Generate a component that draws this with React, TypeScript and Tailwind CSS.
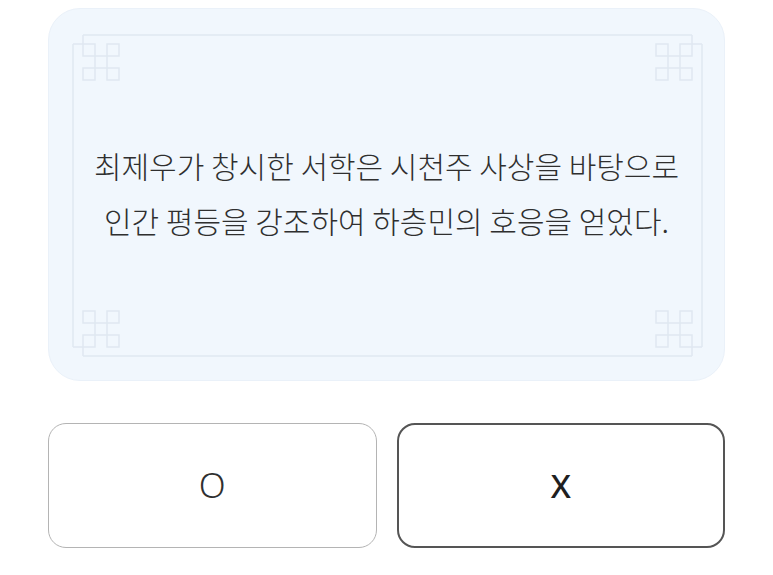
import React from "react";

function Knot({ x, y }: { x: number; y: number }) {
  const s = 12;
  const a = x, b = x + s, c = x + 2 * s, d = x + 3 * s;
  const e = y, f = y + s, g = y + 2 * s, h = y + 3 * s;
  return (
    <path
      d={`M${a} ${e}H${b}V${h}H${a}V${g}H${d}V${h}H${c}V${e}H${d}V${f}H${a}Z`}
      fill="none"
    />
  );
}

function Frame() {
  const W = 677;
  const H = 373;
  return (
    <svg
      className="absolute inset-0 pointer-events-none"
      width={W}
      height={H}
      viewBox={`0 0 ${W} ${H}`}
      fill="none"
      stroke="#dfe8f1"
      strokeWidth={1.5}
    >
      <path d={`M34 26H${W - 34}`} />
      <path d={`M34 ${H - 26}H${W - 34}`} />
      <path d={`M24 35V${H - 35}`} />
      <path d={`M${W - 24} 35V${H - 35}`} />
      <path d="M34 26V35M24 35H34" />
      <path d={`M${W - 34} 26V35M${W - 24} 35H${W - 34}`} />
      <path d={`M34 ${H - 26}V${H - 35}M24 ${H - 35}H34`} />
      <path d={`M${W - 34} ${H - 26}V${H - 35}M${W - 24} ${H - 35}H${W - 34}`} />
      <Knot x={34} y={35} />
      <Knot x={W - 70} y={35} />
      <Knot x={34} y={H - 71} />
      <Knot x={W - 70} y={H - 71} />
    </svg>
  );
}

export default function App() {
  return (
    <div className="w-[773px] h-[575px] bg-white px-12 pt-2 flex flex-col">
      <div className="relative h-[373px] rounded-[32px] bg-[#f1f7fd] border border-[#eaf1f9] flex items-center justify-center">
        <Frame />
        <p
          className="relative -mt-[4px] text-center text-[30px] leading-[55px] font-light text-[#2f2f2f] whitespace-nowrap"
          style={{ fontFamily: '"Noto Sans CJK KR", "Noto Sans", sans-serif' }}
        >
          최제우가 창시한 서학은 시천주 사상을 바탕으로
          <br />
          인간 평등을 강조하여 하층민의 호응을 얻었다.
        </p>
      </div>
      <div className="mt-[42px] grid grid-cols-2 gap-5">
        <button
          className="h-[125px] rounded-[18px] border-[1.5px] border-[#b4b4b4] bg-white flex items-center justify-center text-[35px] text-[#2f2f2f]"
          style={{ fontFamily: '"Noto Sans", sans-serif', fontWeight: 300 }}
        >
          O
        </button>
        <button
          className="h-[125px] rounded-[18px] border-2 border-[#555555] bg-white flex items-center justify-center text-[33px] text-[#1f1f1f]"
          style={{ fontFamily: '"Noto Sans", sans-serif', fontWeight: 500 }}
        >
          X
        </button>
      </div>
    </div>
  );
}
